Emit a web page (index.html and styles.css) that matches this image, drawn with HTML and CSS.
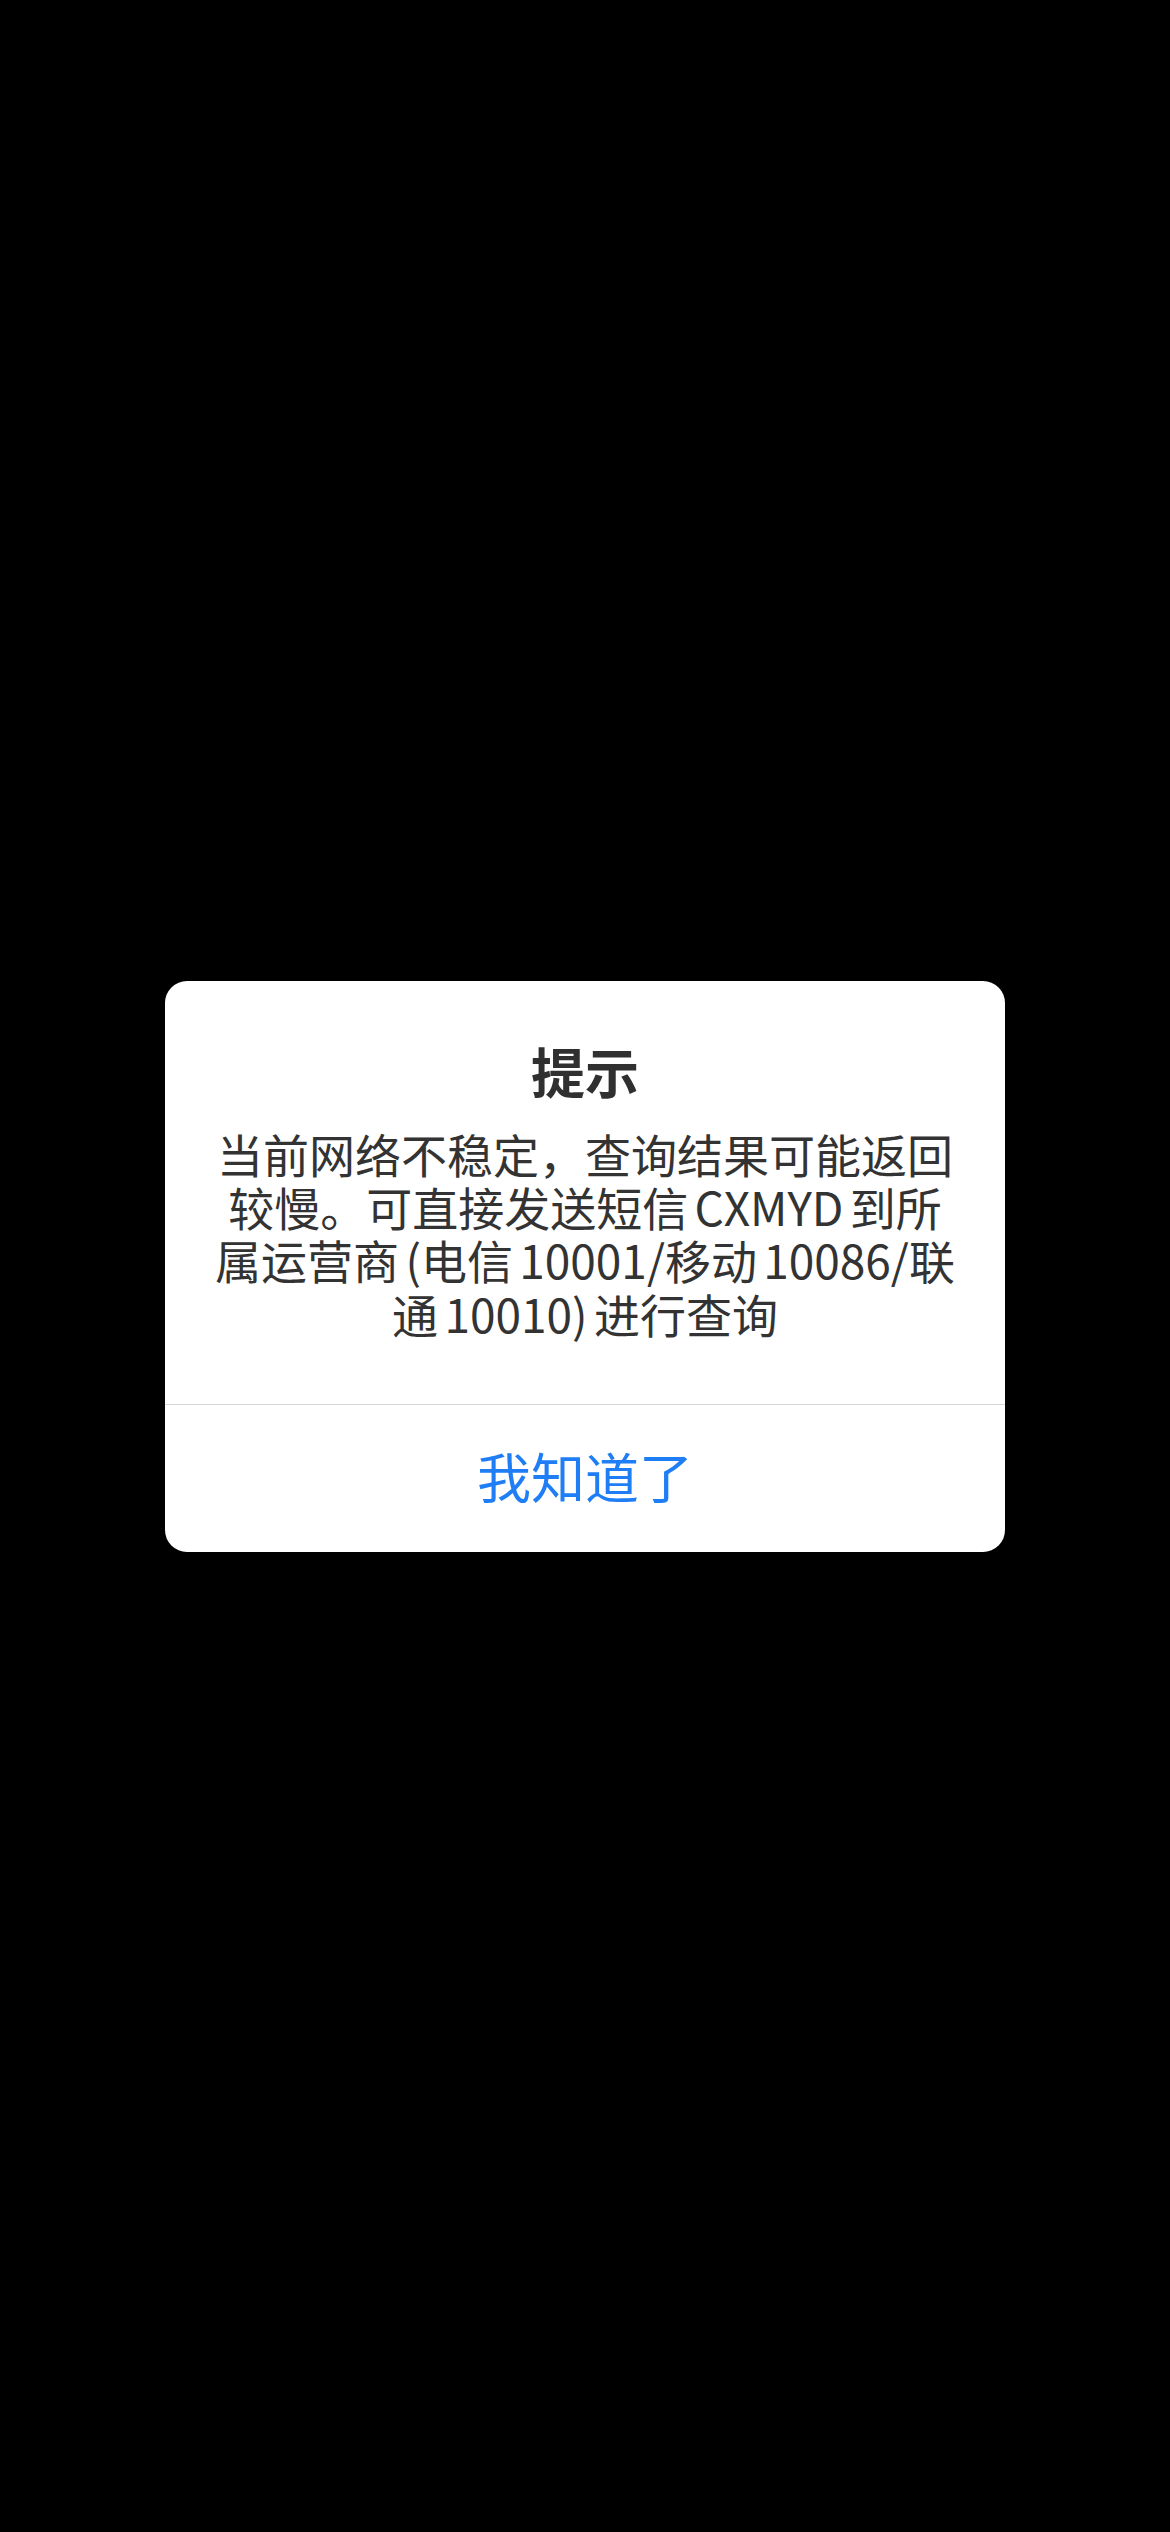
FILE: index.html
```html
<!DOCTYPE html>
<html lang="zh-CN">
<head>
<meta charset="utf-8">
<title>提示</title>
<link rel="stylesheet" href="styles.css">
</head>
<body>
<div class="overlay">
  <div class="alert">
    <div class="alert-content">
      <div class="alert-title">提示</div>
      <div class="alert-message">当前网络不稳定，查询结果可能返回<br>较慢。可直接发送短信 CXMYD 到所<br>属运营商 (电信 10001/移动 10086/联<br>通 10010) 进行查询</div>
    </div>
    <div class="alert-actions">
      <div class="alert-button">我知道了</div>
    </div>
  </div>
</div>
</body>
</html>
```

FILE: styles.css
```css
html, body {
  margin: 0;
  padding: 0;
  background: #000;
}

body {
  font-family: "Noto Sans CJK SC", "Noto Sans", sans-serif;
}

.overlay {
  width: 1170px;
  height: 2532px;
  display: flex;
  align-items: center;
  justify-content: center;
}

.alert {
  width: 840px;
  height: 571px;
  background: #fff;
  border-radius: 22px;
  display: flex;
  flex-direction: column;
  overflow: hidden;
}

.alert-content {
  height: 423px;
  box-sizing: border-box;
  padding: 59px 30px 0;
  text-align: center;
}

.alert-title {
  font-size: 54px;
  line-height: 62px;
  font-weight: 700;
  color: #303030;
}

.alert-message {
  margin-top: 25px;
  font-size: 46px;
  line-height: 53.4px;
  color: #333;
  white-space: nowrap;
  word-spacing: -4px;
}

.alert-actions {
  border-top: 1px solid #d6d6d6;
  flex: 1;
  display: flex;
}

.alert-button {
  flex: 1;
  display: flex;
  align-items: center;
  justify-content: center;
  padding-bottom: 6px;
  font-size: 54px;
  color: #1f7ef5;
}
```
